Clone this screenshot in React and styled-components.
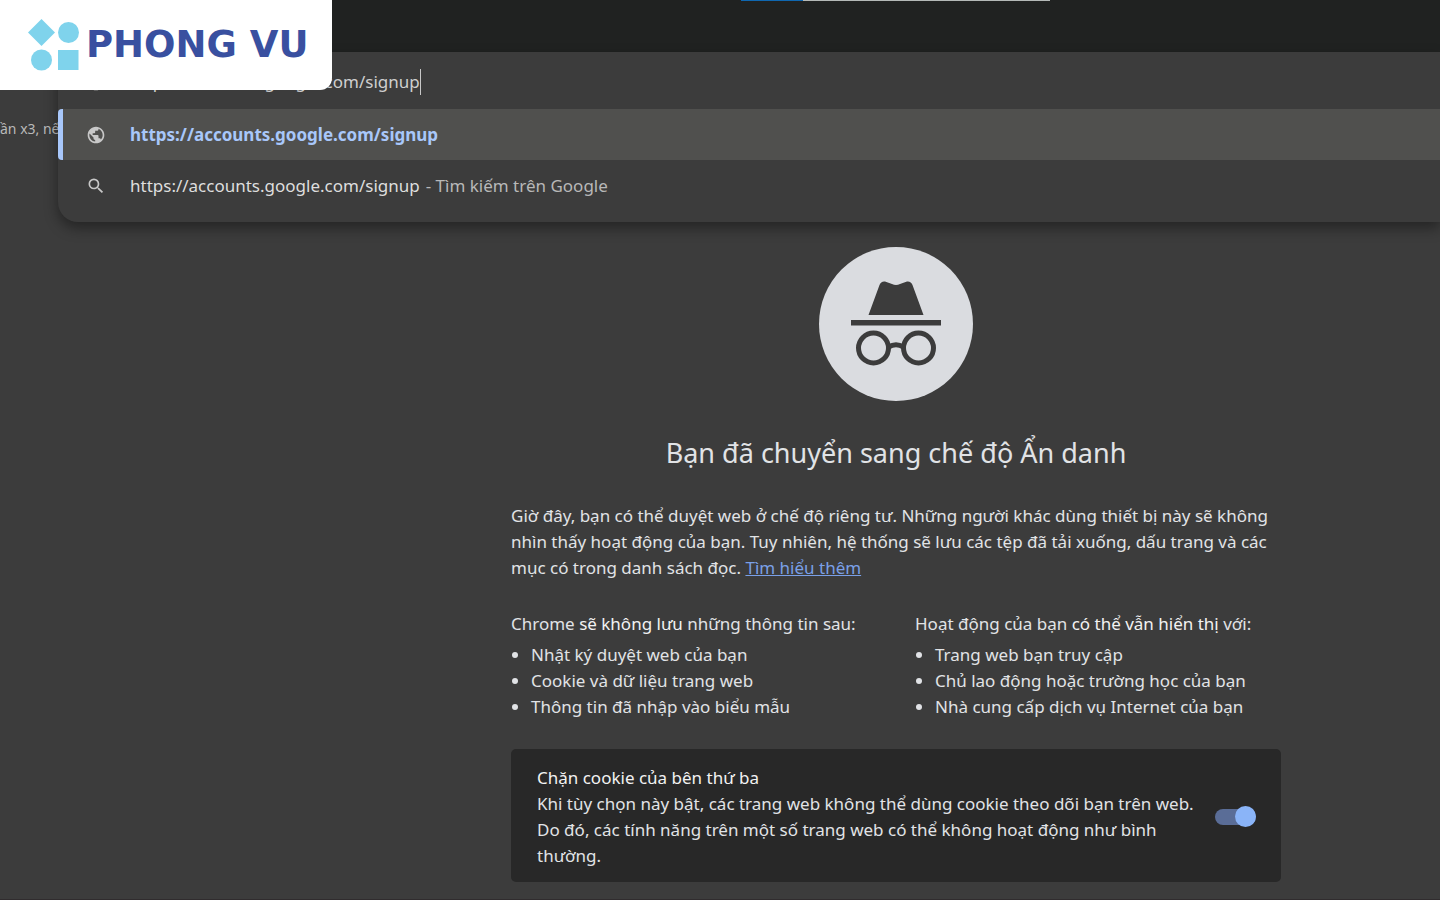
import React, { useState } from "react";
import styled, { createGlobalStyle } from "styled-components";
import { MdPublic, MdSearch } from "react-icons/md";

const SIGNUP_URL = "https://accounts.google.com/signup";

const notSaved = [
	"Nhật ký duyệt web của bạn",
	"Cookie và dữ liệu trang web",
	"Thông tin đã nhập vào biểu mẫu",
];

const stillVisible = [
	"Trang web bạn truy cập",
	"Chủ lao động hoặc trường học của bạn",
	"Nhà cung cấp dịch vụ Internet của bạn",
];

function IncognitoIcon() {
	return (
		<svg width="154" height="154" viewBox="0 0 154 154" aria-hidden="true">
			<circle cx="77" cy="77" r="77" fill="#dadce0" />
			<path
				d="M49.500 68 L60.500 38 Q62 34 66 34.500 L73 37 Q77 39 81 37 L88 34.500 Q92 34 93.500 38 L104.500 68 Z"
				fill="#3c3c3c"
			/>
			<rect x="32" y="73" width="90" height="5.500" fill="#3c3c3c" />
			<g fill="none" stroke="#3c3c3c" strokeWidth="5">
				<circle cx="54.500" cy="101" r="15" />
				<circle cx="99.500" cy="101" r="15" />
				<path d="M69.500 100 Q77 95.500 84.500 100" />
			</g>
		</svg>
	);
}

function LogoMark() {
	return (
		<svg width="52" height="52" viewBox="0 0 52 52" fill="#7fd3ec" aria-hidden="true">
			<path d="M13.500 0 L27 13.500 L13.500 27 L0 13.500 Z" />
			<circle cx="40.500" cy="13.500" r="10.500" />
			<circle cx="13.500" cy="41" r="10.500" />
			<rect x="30" y="31" width="20.500" height="20" />
		</svg>
	);
}

function App() {
	const [url, setUrl] = useState(SIGNUP_URL);
	const [blockCookies, setBlockCookies] = useState(true);

	return (
		<Page>
			<GlobalStyle />
			<Brand>
				<LogoMark />
				<BrandName>PHONG VU</BrandName>
			</Brand>
			<TopBar>
				<Loaded />
				<Remaining />
			</TopBar>
			<Omnibox>
				<Bookmark>ần x3, nế</Bookmark>
				<Popup>
					<AddressRow>
						<MdPublic size={20} />
						<Address
							aria-label="URL"
							value={url}
							onChange={(e) => setUrl(e.target.value)}
						/>
					</AddressRow>
					<Suggestion $selected>
						<MdPublic size={20} />
						<span>{SIGNUP_URL}</span>
					</Suggestion>
					<Suggestion>
						<MdSearch size={20} />
						<span>{SIGNUP_URL}</span>
						<Hint>- Tìm kiếm trên Google</Hint>
					</Suggestion>
				</Popup>
			</Omnibox>
			<Main>
				<Content>
					<IconWrap>
						<IncognitoIcon />
					</IconWrap>
					<Title>Bạn đã chuyển sang chế độ Ẩn danh</Title>
					<Text>
						Giờ đây, bạn có thể duyệt web ở chế độ riêng tư. Những người khác dùng
						thiết bị này sẽ không nhìn thấy hoạt động của bạn. Tuy nhiên, hệ thống
						sẽ lưu các tệp đã tải xuống, dấu trang và các mục có trong danh sách
						đọc. <Link href="#more">Tìm hiểu thêm</Link>
					</Text>
					<Columns>
						<div>
							<Text>
								Chrome <Em>sẽ không lưu</Em> những thông tin sau:
							</Text>
							<List>
								{notSaved.map((item) => (
									<li key={item}>{item}</li>
								))}
							</List>
						</div>
						<div>
							<Text>
								Hoạt động của bạn <Em>có thể vẫn hiển thị</Em> với:
							</Text>
							<List>
								{stillVisible.map((item) => (
									<li key={item}>{item}</li>
								))}
							</List>
						</div>
					</Columns>
					<CookieCard>
						<CookieText>
							<CookieLabel htmlFor="cookies">Chặn cookie của bên thứ ba</CookieLabel>
							<Text>
								Khi tùy chọn này bật, các trang web không thể dùng cookie theo dõi
								bạn trên web. Do đó, các tính năng trên một số trang web có thể
								không hoạt động như bình thường.
							</Text>
						</CookieText>
						<Toggle
							id="cookies"
							type="checkbox"
							checked={blockCookies}
							onChange={(e) => setBlockCookies(e.target.checked)}
						/>
					</CookieCard>
				</Content>
			</Main>
		</Page>
	);
}

export default App;

const GlobalStyle = createGlobalStyle`
	* {
		box-sizing: border-box;
	}
	body {
		margin: 0;
		background-color: #3c3c3c;
		color: #e1e3e6;
		font-family: "Noto Sans", "Open Sans", sans-serif;
		font-size: 17px;
		line-height: 26px;
	}
`;
const Page = styled.div`
	position: relative;
	min-height: 100vh;
	border-bottom: 1px solid #302c2e;
	overflow: hidden;
`;
const Brand = styled.div`
	position: absolute;
	top: 0;
	left: 0;
	z-index: 2;
	display: flex;
	align-items: center;
	gap: 6px;
	height: 90px;
	padding: 0 24px 0 28px;
	background-color: #fff;
	border-bottom-right-radius: 12px;
`;
const BrandName = styled.span`
	color: #3950a0;
	font-family: "DejaVu Sans", sans-serif;
	font-size: 37px;
	font-weight: bold;
	white-space: nowrap;
`;
const TopBar = styled.header`
	display: flex;
	height: 52px;
	padding-left: 741px;
	background-color: #202221;
`;
const Loaded = styled.div`
	width: 62px;
	height: 1px;
	background-color: #0f67b0;
`;
const Remaining = styled.div`
	width: 247px;
	height: 1px;
	background-color: #b4b9b7;
`;
const Omnibox = styled.div`
	display: flex;
`;
const Bookmark = styled.div`
	flex: 0 0 58px;
	padding-top: 64px;
	overflow: hidden;
	color: #b9b9b9;
	font-size: 14px;
	white-space: nowrap;
`;
const Popup = styled.div`
	position: relative;
	flex: 1;
	min-width: 0;
	padding-bottom: 11px;
	background-color: #3c3c3c;
	border-bottom-left-radius: 20px;
	box-shadow: 0 6px 14px rgba(0, 0, 0, 0.4);
`;
const AddressRow = styled.div`
	display: flex;
	align-items: center;
	gap: 24px;
	height: 57px;
	padding: 2px 28px 0;
	color: #c8c8c8;
`;
const Address = styled.input`
	field-sizing: content;
	height: 26px;
	padding: 0;
	border: 0;
	border-right: 1px solid #c8c8c8;
	outline: none;
	background: none;
	color: #cfcfcf;
	font: inherit;
`;
const Suggestion = styled.div`
	display: flex;
	align-items: center;
	height: 51px;
	padding: 0 28px;
	color: #c8c8c8;
	white-space: nowrap;

	${({ $selected }) =>
		$selected &&
		`
		padding-left: 23px;
		border-left: 5px solid #a8c7fa;
		border-radius: 4px 0 0 4px;
		background-color: #50504e;
	`}

	svg {
		margin-right: 24px;
	}
	span {
		color: ${({ $selected }) => ($selected ? "#a8c7fa" : "#dedede")};
		font-weight: ${({ $selected }) => ($selected ? "bold" : "normal")};
	}
`;
const Hint = styled.span`
	&& {
		margin-left: 6px;
		color: #b8b8b8;
	}
`;
const Main = styled.main`
	display: flex;
	justify-content: center;
	padding: 25px 0 17px 352px;
`;
const Content = styled.div`
	width: 100%;
	max-width: 770px;
`;
const IconWrap = styled.div`
	display: flex;
	justify-content: center;
`;
const Title = styled.h1`
	margin: 33px 0 31px;
	font-size: 27px;
	font-weight: normal;
	line-height: 38px;
	text-align: center;
`;
const Text = styled.p`
	margin: 0;
`;
const Link = styled.a`
	color: #7aa0e8;
`;
const Em = styled.span`
	color: #f2f2f2;
`;
const Columns = styled.div`
	display: grid;
	grid-template-columns: 1fr 1fr;
	gap: 38px;
	margin: 30px 0 29px;
`;
const List = styled.ul`
	margin: 5px 0 0;
	padding-left: 20px;
`;
const CookieCard = styled.section`
	display: flex;
	align-items: center;
	gap: 20px;
	padding: 16px 25px 13px 26px;
	border-radius: 5px;
	background-color: #282828;
`;
const CookieText = styled.div`
	flex: 1;
`;
const CookieLabel = styled.label`
	color: #f2f2f2;
`;
const Toggle = styled.input`
	appearance: none;
	position: relative;
	flex: none;
	width: 41px;
	height: 16px;
	margin: 0;
	border-radius: 8px;
	background-color: #5a6d97;

	&::after {
		content: "";
		position: absolute;
		top: -3px;
		left: ${({ checked }) => (checked ? "20px" : "0")};
		width: 21px;
		height: 21px;
		border-radius: 50%;
		background-color: #8ab4f8;
	}
`;
